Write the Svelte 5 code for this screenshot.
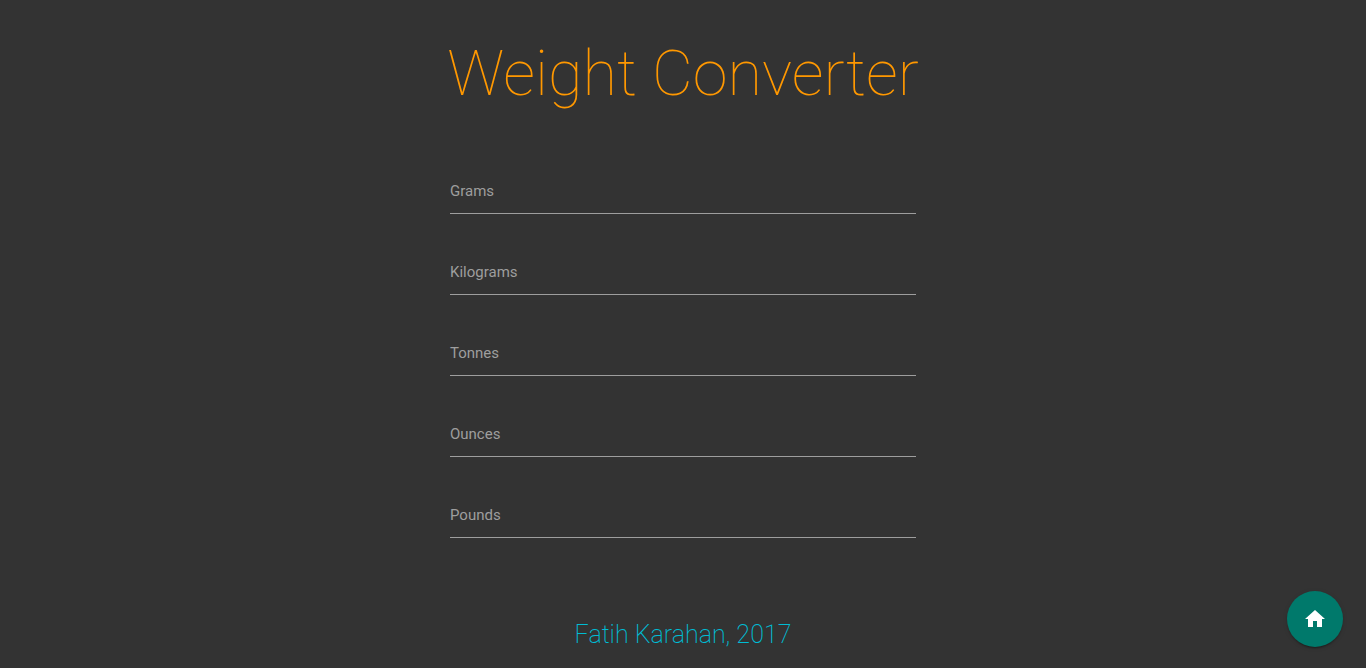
<script>
  const units = [
    { id: 'grams', label: 'Grams', factor: 1 },
    { id: 'kilograms', label: 'Kilograms', factor: 1000 },
    { id: 'tonnes', label: 'Tonnes', factor: 1000000 },
    { id: 'ounces', label: 'Ounces', factor: 28.349523125 },
    { id: 'pounds', label: 'Pounds', factor: 453.59237 }
  ];

  let values = $state({ grams: '', kilograms: '', tonnes: '', ounces: '', pounds: '' });

  function convert(unit, text) {
    const amount = parseFloat(text);
    for (const other of units) {
      if (other.id === unit.id) values[other.id] = text;
      else values[other.id] = Number.isNaN(amount) ? '' : String(amount * unit.factor / other.factor);
    }
  }
</script>

<main>
  <h1>Weight Converter</h1>
  <form>
    {#each units as unit}
      <div class="field">
        <input
          id={unit.id}
          type="text"
          inputmode="decimal"
          autocomplete="off"
          value={values[unit.id]}
          oninput={(e) => convert(unit, e.currentTarget.value)}
        />
        <label for={unit.id} class:raised={values[unit.id] !== ''}>{unit.label}</label>
      </div>
    {/each}
  </form>
  <footer>Fatih Karahan, 2017</footer>
</main>

<a class="home" href="#home" aria-label="Home">
  <svg viewBox="0 0 24 24" aria-hidden="true"><path d="M10 20v-6h4v6h5v-8h3L12 3 2 12h3v8z" /></svg>
</a>

<style>
  :global(body) {
    margin: 0;
    background: #333;
    font-family: Roboto, sans-serif;
  }
  main {
    display: flex;
    flex-direction: column;
    align-items: center;
    padding: 37px 12px 16px;
  }
  h1 {
    margin: 0;
    font-size: 63px;
    line-height: 74px;
    font-weight: 100;
    color: #ff9800;
    text-align: center;
  }
  form {
    display: flex;
    flex-direction: column;
    gap: 35px;
    width: 100%;
    max-width: 466px;
    margin-top: 57px;
  }
  .field {
    display: grid;
  }
  input,
  label {
    grid-area: 1 / 1;
    font: 15px/22px Roboto, sans-serif;
  }
  input {
    box-sizing: border-box;
    width: 100%;
    height: 46px;
    padding: 0;
    border: 0;
    border-bottom: 1px solid #9e9e9e;
    border-radius: 0;
    outline: none;
    background: transparent;
    color: #fff;
  }
  label {
    align-self: center;
    justify-self: start;
    color: #9e9e9e;
    pointer-events: none;
  }
  input:focus {
    border-color: #26a69a;
  }
  .raised,
  input:focus + label {
    align-self: start;
    margin-top: -10px;
    font-size: 12px;
  }
  footer {
    margin-top: 80px;
    font-size: 25px;
    line-height: 33px;
    font-weight: 200;
    color: #00bcd4;
  }
  .home {
    position: fixed;
    right: 23px;
    bottom: 21px;
    display: grid;
    place-items: center;
    width: 56px;
    height: 56px;
    border-radius: 50%;
    background: #00796b;
    box-shadow: 0 2px 2px rgba(0, 0, 0, 0.14), 0 1px 5px rgba(0, 0, 0, 0.12), 0 3px 1px -2px rgba(0, 0, 0, 0.2);
  }
  .home svg {
    width: 24px;
    height: 24px;
    fill: #fff;
  }
</style>
